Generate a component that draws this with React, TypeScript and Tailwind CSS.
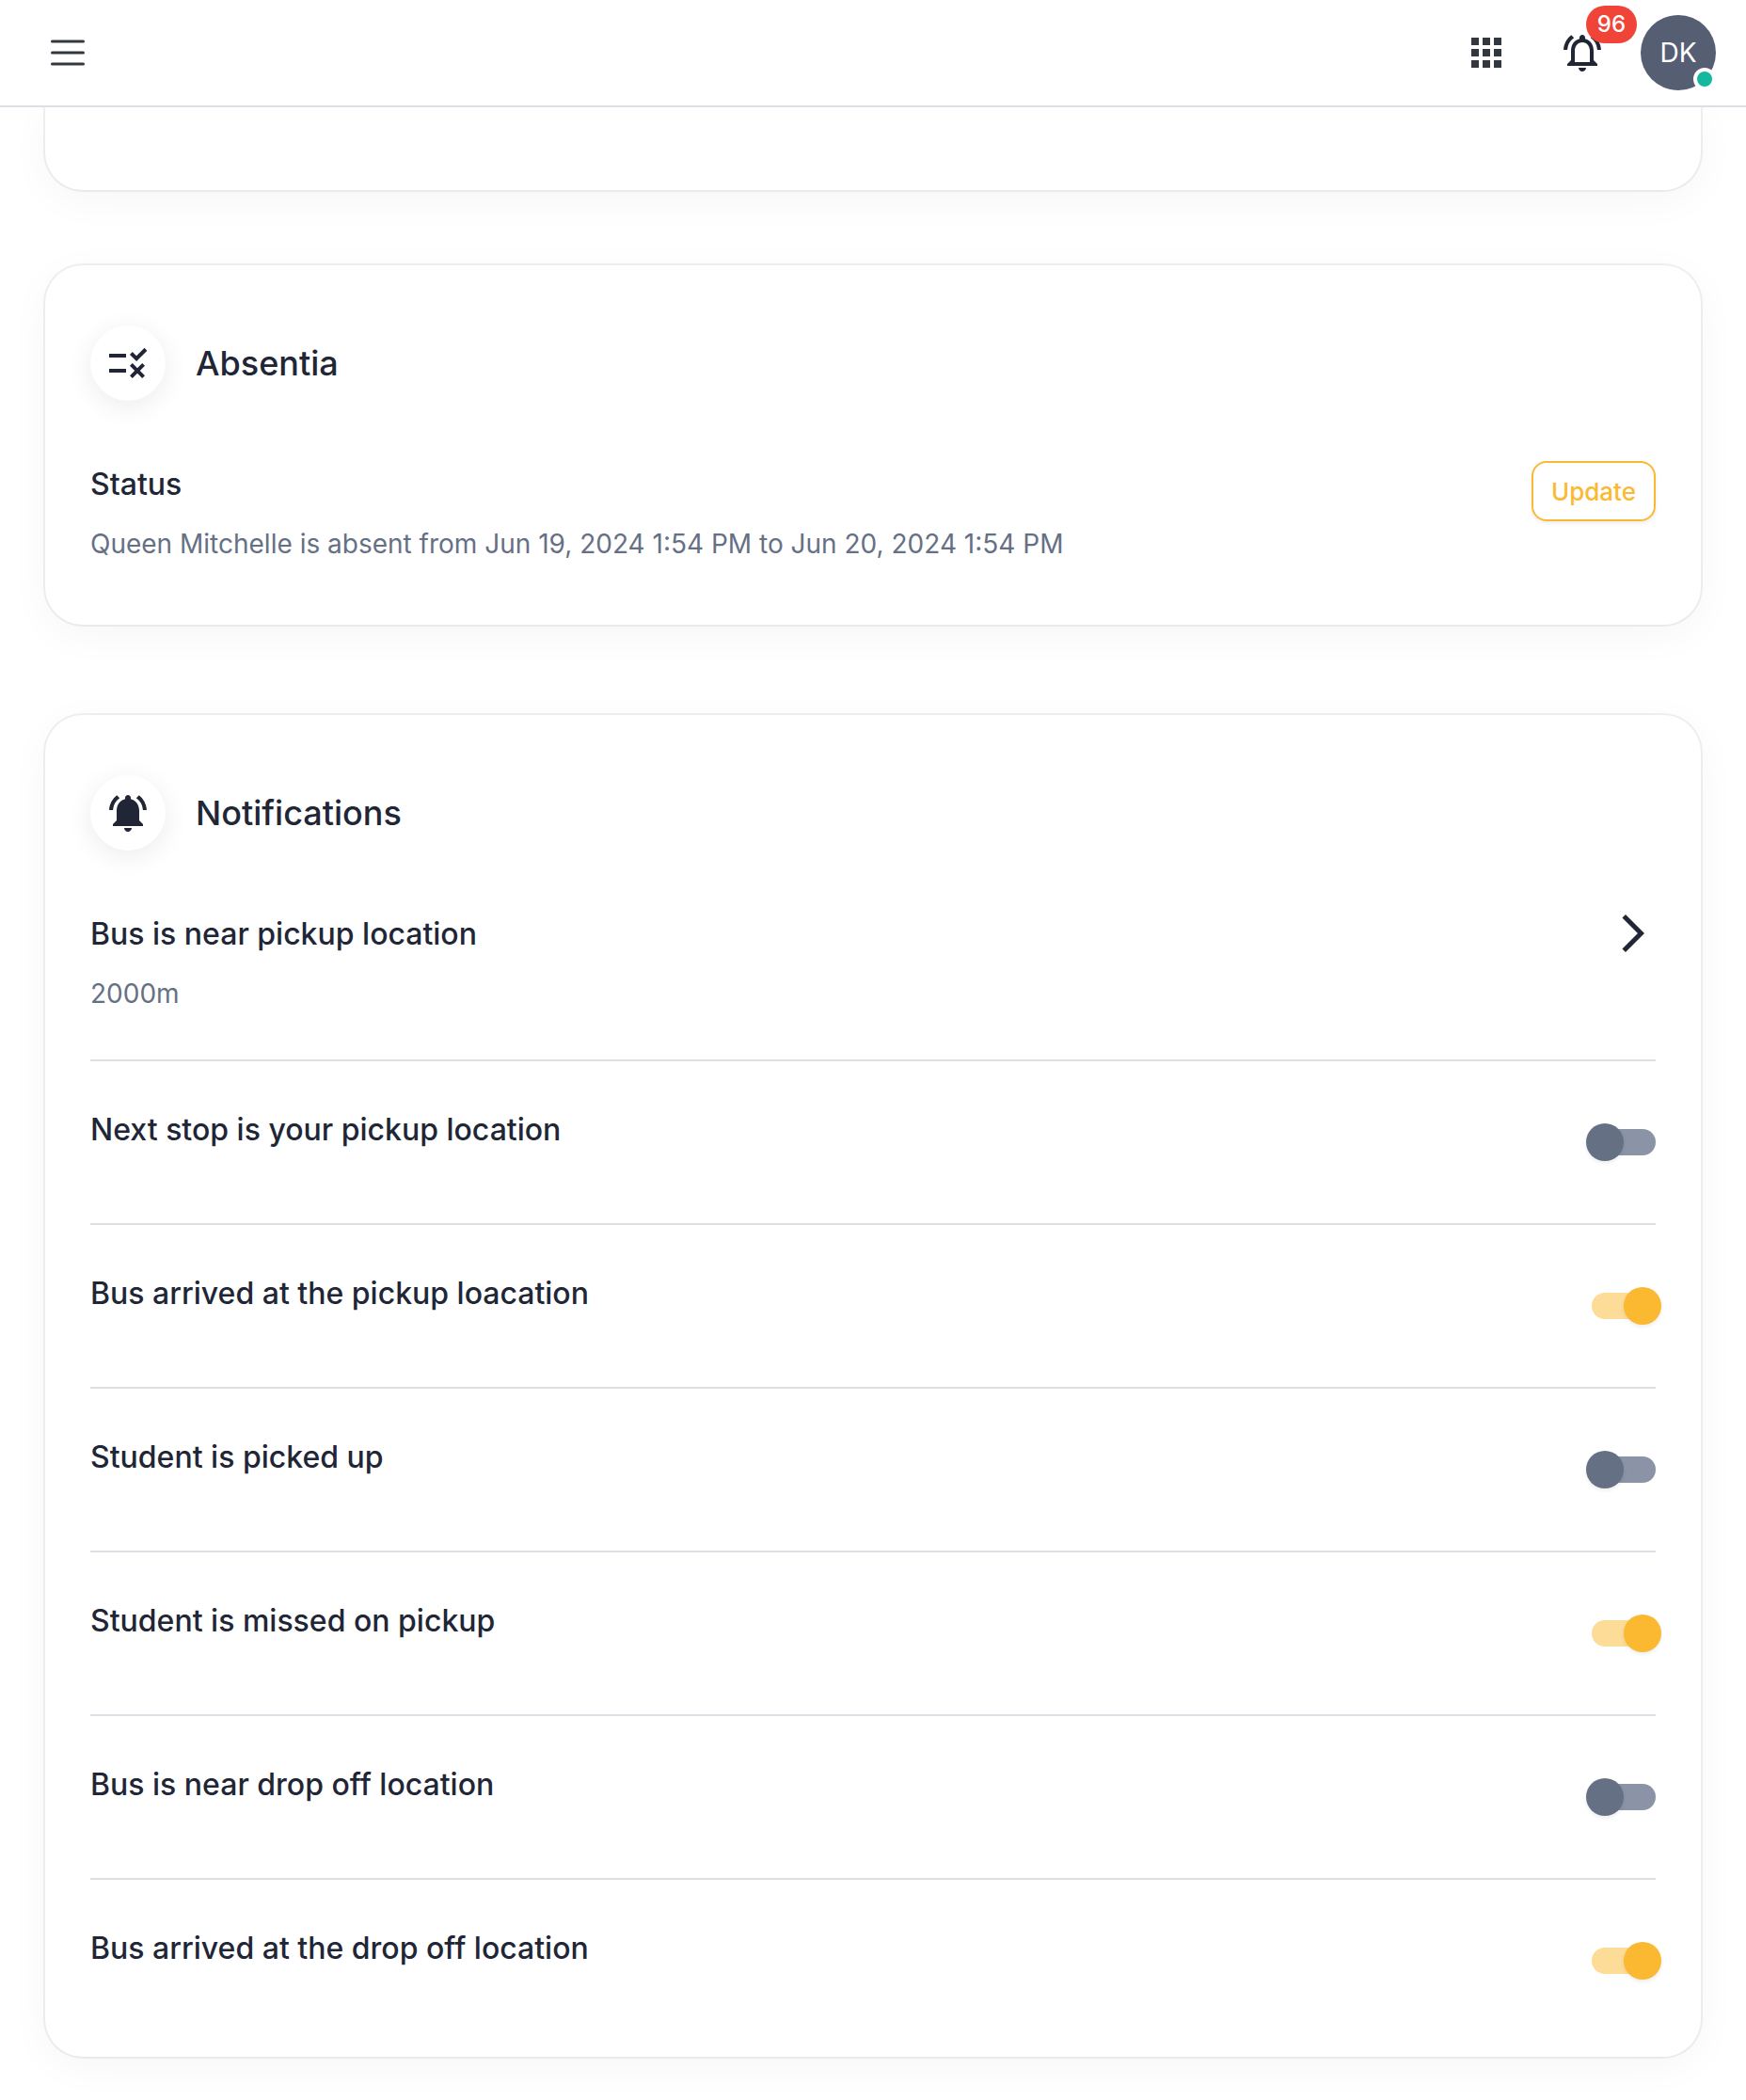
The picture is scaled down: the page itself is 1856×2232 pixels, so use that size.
import { useState } from "react";
import {
  MdApps,
  MdArrowForwardIos,
  MdNotificationsActive,
  MdOutlineNotificationsActive,
  MdRule
} from "react-icons/md";
import type { IconType } from "react-icons";
import type { ReactNode } from "react";

interface NotificationSetting {
  id: string;
  label: string;
  enabled: boolean;
}

const initialSettings: NotificationSetting[] = [
  { id: "next-stop", label: "Next stop is your pickup location", enabled: false },
  { id: "arrived-pickup", label: "Bus arrived at the pickup loacation", enabled: true },
  { id: "picked-up", label: "Student is picked up", enabled: false },
  { id: "missed-pickup", label: "Student is missed on pickup", enabled: true },
  { id: "near-dropoff", label: "Bus is near drop off location", enabled: false },
  { id: "arrived-dropoff", label: "Bus arrived at the drop off location", enabled: true }
];

const cardStyle =
  "bg-white shadow-[0_10px_44px_rgba(0,0,0,0.04),0_0_0_2px_rgba(0,0,0,0.06)]";

function Header() {
  return (
    <header className="sticky top-0 z-10 flex items-center justify-between border-b-2 border-[#dcdfe4] bg-white px-8 py-4">
      <button type="button" title="Open menu" className="cursor-pointer p-4 text-[#32383e]">
        <svg
          viewBox="0 0 24 24"
          fill="none"
          stroke="currentColor"
          strokeWidth="1.5"
          strokeLinecap="round"
          className="size-12">
          <path d="M3.75 6h16.5M3.75 12h16.5M3.75 18h16.5" />
        </svg>
      </button>

      <div className="flex items-center gap-[22px]">
        <button type="button" title="Apps" className="cursor-pointer p-4 text-[#32383e]">
          <MdApps className="size-12" />
        </button>

        <button
          type="button"
          title="Notifications"
          className="relative cursor-pointer p-4 text-[#212636]">
          <MdOutlineNotificationsActive className="size-12" />
          <span className="absolute -top-[10px] -right-[18px] flex h-10 items-center rounded-full bg-[#f04438] px-3 text-[24px] leading-none font-medium text-white">
            96
          </span>
        </button>

        <button
          type="button"
          title="Account"
          className="relative flex size-20 cursor-pointer items-center justify-center rounded-full bg-[#565e73] text-[28px] text-white">
          DK
          <span className="absolute right-0 bottom-0 size-6 rounded-full border-4 border-white bg-[#15b79f]" />
        </button>
      </div>
    </header>
  );
}

interface CardProps {
  icon: IconType;
  title: string;
  children: ReactNode;
}

function Card({ icon: Icon, title, children }: CardProps) {
  return (
    <section className={`rounded-[40px] px-12 py-16 ${cardStyle}`}>
      <div className="mb-16 flex items-center gap-8">
        <div className="flex size-20 items-center justify-center rounded-full bg-white shadow-[0_6px_28px_rgba(0,0,0,0.08)]">
          <Icon className="size-12" />
        </div>
        <h2 className="text-[36px] leading-[43px] font-medium">{title}</h2>
      </div>
      {children}
    </section>
  );
}

interface SettingRowProps {
  setting: NotificationSetting;
  onToggle: (id: string) => void;
}

function SettingRow({ setting, onToggle }: SettingRowProps) {
  return (
    <li className="flex items-start justify-between border-t-2 border-[#dcdfe4] py-12 last:pb-0">
      <label htmlFor={setting.id} className="text-[32px] leading-[50px] font-medium">
        {setting.label}
      </label>
      <div className="flex h-[76px] items-center">
        <input
          id={setting.id}
          type="checkbox"
          role="switch"
          checked={setting.enabled}
          onChange={() => onToggle(setting.id)}
          className="relative h-7 w-[68px] cursor-pointer appearance-none rounded-full bg-[#8a94a6] before:absolute before:-top-[6px] before:-left-[6px] before:size-10 before:rounded-full before:bg-[#667085] before:shadow-[0_2px_4px_rgba(0,0,0,0.08)] checked:bg-[#fddc98] checked:before:left-[34px] checked:before:bg-[#fbb932]"
        />
      </div>
    </li>
  );
}

export default function App() {
  const [settings, setSettings] = useState(initialSettings);

  const handleToggle = (id: string) => {
    setSettings((prev) =>
      prev.map((item) =>
        item.id === id ? { ...item, enabled: !item.enabled } : item
      )
    );
  };

  return (
    <div className="min-h-screen bg-white font-[Inter,sans-serif] text-[#212636]">
      <Header />

      <main className="px-12 pb-10">
        {/* End of the card that is scrolled under the header */}
        <div className={`mb-20 h-[88px] rounded-b-[40px] ${cardStyle}`} />

        <div className="flex flex-col gap-24">
          <Card icon={MdRule} title="Absentia">
            <div className="flex items-start justify-between">
              <div>
                <h3 className="text-[32px] leading-[50px] font-medium">Status</h3>
                <p className="mt-4 text-[28px] leading-[44px] text-[#667085]">
                  Queen Mitchelle is absent from Jun 19, 2024 1:54 PM to Jun 20, 2024 1:54 PM
                </p>
              </div>
              <button
                type="button"
                className="h-16 cursor-pointer rounded-[16px] border-2 border-[#fbb932] px-[19px] text-[26px] font-medium text-[#fbb932] shadow-[0_2px_4px_rgba(0,0,0,0.08)]">
                Update
              </button>
            </div>
          </Card>

          <Card icon={MdNotificationsActive} title="Notifications">
            <div className="flex items-start justify-between pb-12">
              <div>
                <h3 className="text-[32px] leading-[50px] font-medium">
                  Bus is near pickup location
                </h3>
                <p className="mt-4 text-[28px] leading-[44px] text-[#667085]">2000m</p>
              </div>
              <button type="button" title="Change distance" className="cursor-pointer">
                <MdArrowForwardIos className="size-12" />
              </button>
            </div>

            <ul>
              {settings.map((setting) => (
                <SettingRow key={setting.id} setting={setting} onToggle={handleToggle} />
              ))}
            </ul>
          </Card>
        </div>
      </main>
    </div>
  );
}
